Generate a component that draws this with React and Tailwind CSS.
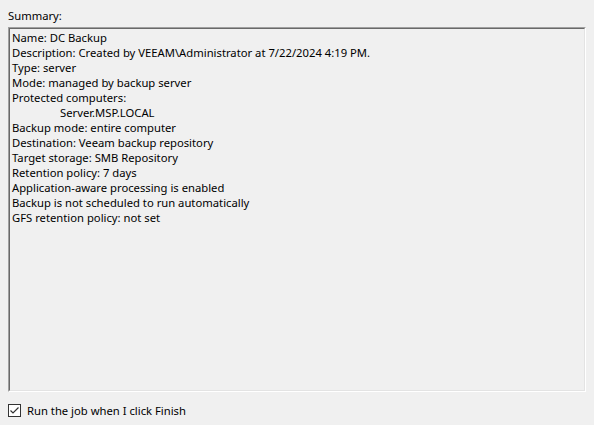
export default function App() {
  const lines = [
    "Name: DC Backup",
    "Description: Created by VEEAM\\Administrator at 7/22/2024 4:19 PM.",
    "Type: server",
    "Mode: managed by backup server",
    "Protected computers:",
    "__Server.MSP.LOCAL",
    "Backup mode: entire computer",
    "Destination: Veeam backup repository",
    "Target storage: SMB Repository",
    "Retention policy: 7 days",
    "Application-aware processing is enabled",
    "Backup is not scheduled to run automatically",
    "GFS retention policy: not set",
  ];
  return (
    <div
      className="w-[594px] h-[425px] bg-[#f0f0f0] text-black text-[11.25px] leading-[15px] flex flex-col px-[8px] pt-[8px]"
      style={{ fontFamily: '"Noto Sans", sans-serif' }}
    >
      <div className="h-[19px]">Summary:</div>
      <div className="w-[578px] h-[365px] border-t border-l border-t-[#a0a0a0] border-l-[#a0a0a0] border-b border-r border-b-white border-r-white">
        <div className="w-full h-full border-t border-l border-t-[#696969] border-l-[#696969] border-b border-r border-b-[#e3e3e3] border-r-[#e3e3e3] pt-[1px] pl-[2px]">
          {lines.map((l, i) =>
            l.startsWith("__") ? (
              <div key={i} className="pl-[48px] whitespace-nowrap">{l.slice(2)}</div>
            ) : (
              <div key={i} className="whitespace-nowrap">{l}</div>
            )
          )}
        </div>
      </div>
      <div className="flex items-center gap-[6px] mt-[11px]">
        <div className="w-[13px] h-[13px] border border-[#333] bg-white flex items-center justify-center">
          <svg width="11" height="11" viewBox="0 0 11 11">
            <path d="M1.5 5.5 L4 8 L9.5 2.5" stroke="#333" strokeWidth="1.2" fill="none" />
          </svg>
        </div>
        <span>Run the job when I click Finish</span>
      </div>
    </div>
  );
}
